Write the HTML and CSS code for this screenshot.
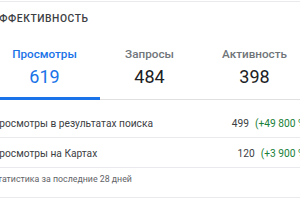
FILE: index.html
```html
<!DOCTYPE html>
<html lang="ru">
<head>
<meta charset="utf-8">
<link rel="stylesheet" href="styles.css">
</head>
<body>
<div class="card">
  <div class="title">Эффективность</div>
  <div class="tabs">
    <div class="tab active"><div class="tab-label">Просмотры</div><div class="tab-num">619</div></div>
    <div class="tab"><div class="tab-label">Запросы</div><div class="tab-num">484</div></div>
    <div class="tab"><div class="tab-label">Активность</div><div class="tab-num">398</div></div>
  </div>
  <div class="rows">
    <div class="row"><span class="row-label">Просмотры в результатах поиска</span><span class="row-val">499<span class="delta">(+49 800 %)</span></span></div>
    <div class="row"><span class="row-label">Просмотры на Картах</span><span class="row-val">120<span class="delta">(+3 900 %)</span></span></div>
  </div>
  <div class="footer">Статистика за последние 28 дней</div>
</div>
</body>
</html>
```
FILE: styles.css
```css
html, body {
  margin: 0;
  padding: 0;
  background: #ffffff;
  overflow: hidden;
}
body {
  font-family: Roboto, "Noto Sans", sans-serif;
  color: #202124;
}
.card {
  margin-top: 1px;
  margin-left: -8px;
  width: 317px;
  border-top: 1px solid #e8eaed;
}
.title {
  padding-top: 9px;
  font-size: 10.3px;
  line-height: 16px;
  font-weight: 500;
  text-transform: uppercase;
  letter-spacing: 0.55px;
  color: #3c4043;
}
.tabs {
  display: grid;
  grid-template-columns: repeat(3, 105px);
  padding-top: 19px;
  border-bottom: 1px solid #e0e0e0;
}
.tab {
  position: relative;
  text-align: center;
  padding-bottom: 10px;
}
.tab-label {
  font-size: 11.7px;
  line-height: 16px;
  font-weight: 500;
  color: #70757a;
}
.tab-num {
  margin-top: 3px;
  font-size: 18px;
  line-height: 24px;
  color: #202124;
}
.tab.active .tab-label,
.tab.active .tab-num {
  color: #1a73e8;
}
.tab.active::after {
  content: "";
  position: absolute;
  left: 0;
  right: -3px;
  bottom: -1px;
  height: 3px;
  background: #1a73e8;
}
.rows {
  padding-top: 8px;
}
.row {
  display: flex;
  justify-content: space-between;
  padding: 7px 0 5px;
  font-size: 10.2px;
  line-height: 17px;
  color: #3c4043;
  border-bottom: 1px solid #e8eaed;
  white-space: nowrap;
}
.delta {
  margin-left: 6px;
  color: #188038;
}
.footer {
  padding: 4px 0 11px;
  font-size: 8.8px;
  line-height: 14px;
  color: #5f6368;
  border-bottom: 1px solid #e8eaed;
}
```
